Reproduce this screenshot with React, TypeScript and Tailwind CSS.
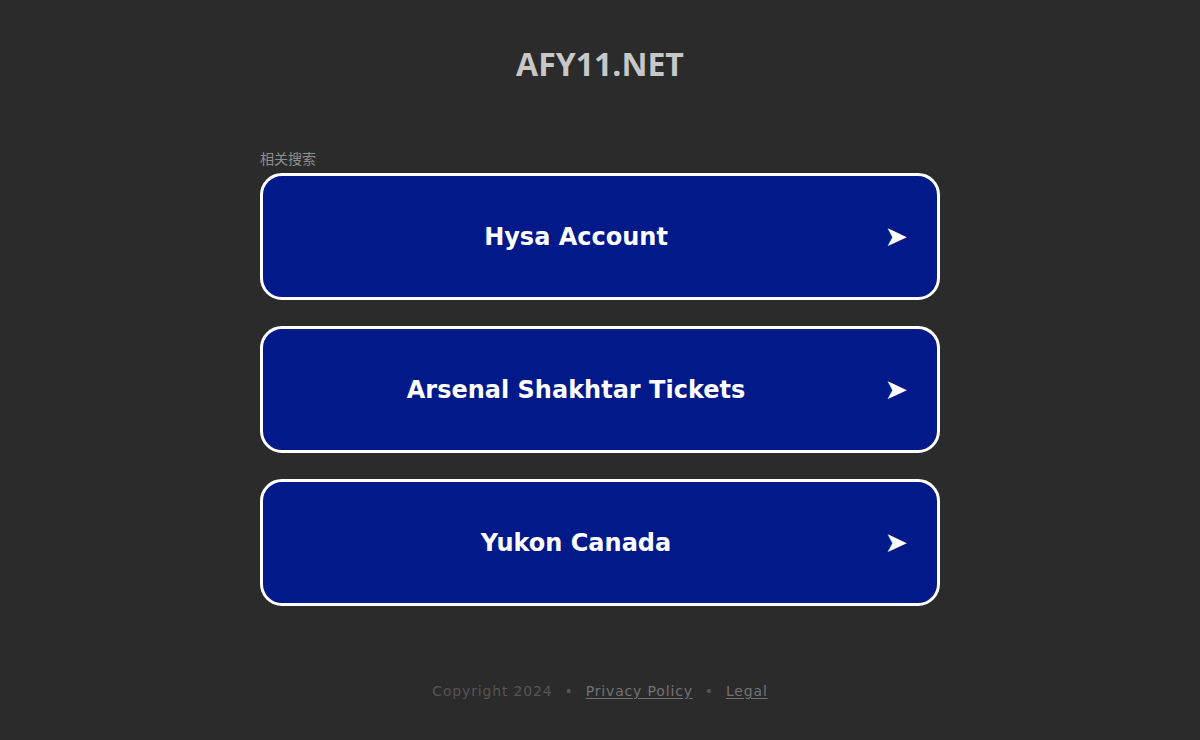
import React from "react";

const links = ["Hysa Account", "Arsenal Shakhtar Tickets", "Yukon Canada"];

export default function App() {
  return (
    <div className="min-h-[740px] bg-[#2b2b2b] font-['Open_Sans',sans-serif]">
      <header className="pt-[42px] text-center">
        <h1 className="text-[32px] leading-[44px] font-bold text-[#c8c8c8]">
          AFY11.NET
        </h1>
      </header>

      <main className="mx-auto mt-[64px] w-[680px]">
        <p className="mb-[6px] font-['Noto_Sans_CJK_SC',sans-serif] text-[14px] leading-[17px] text-[#8f8f8f]">
          相关搜索
        </p>
        <div className="flex flex-col gap-[26px]">
          {links.map((label) => (
            <a
              key={label}
              href="#"
              className="flex h-[127px] items-center rounded-[22px] border-[3px] border-white bg-[#011989] text-white"
            >
              <span className="flex-1 pl-[21px] text-center font-['DejaVu_Sans',Verdana,sans-serif] text-[24px] leading-[30px] font-bold">
                {label}
              </span>
              <span className="w-[69px] pr-[29px] text-right font-['DejaVu_Sans',sans-serif] text-[28px] leading-[30px]">
                ➤
              </span>
            </a>
          ))}
        </div>
      </main>

      <footer className="mt-[75px] text-center font-['DejaVu_Sans',sans-serif] text-[14px] tracking-[0.06em] text-[#555555]">
        <span>Copyright 2024</span>
        <span className="mx-[12px]">•</span>
        <a href="#" className="text-[#727272] underline underline-offset-2">
          Privacy Policy
        </a>
        <span className="mx-[12px]">•</span>
        <a href="#" className="text-[#727272] underline underline-offset-2">
          Legal
        </a>
      </footer>
    </div>
  );
}
